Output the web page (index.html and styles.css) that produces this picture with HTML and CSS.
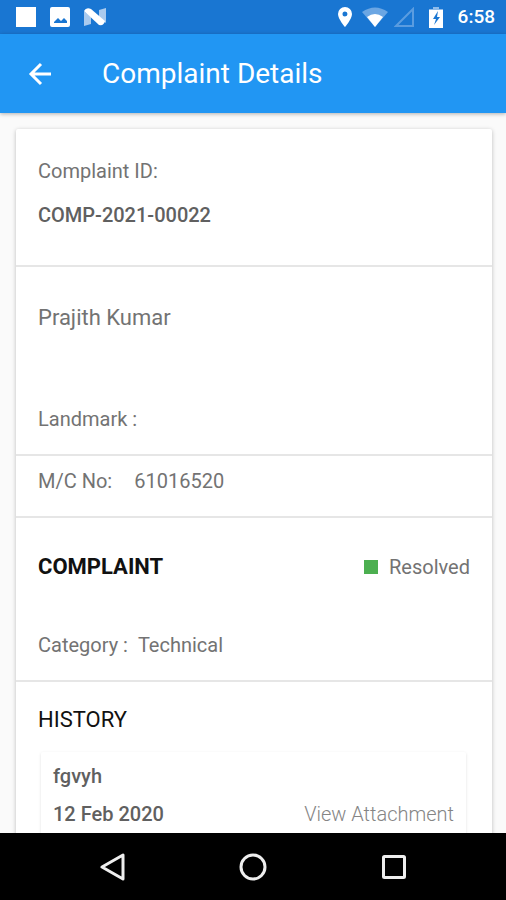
FILE: index.html
```html
<!DOCTYPE html>
<html lang="en">
<head>
<meta charset="utf-8">
<meta name="viewport" content="width=device-width, initial-scale=1">
<title>Complaint Details</title>
<link rel="stylesheet" href="styles.css">
</head>
<body>
<div class="status">
  <div class="status-left">
    <svg width="20" height="20" viewBox="0 0 20 20"><path fill="#fff" d="M0 0h20v20H0z"/></svg>
    <svg width="20" height="20" viewBox="0 0 20 20"><path fill="#fff" fill-rule="evenodd" d="M2 0h16a2 2 0 0 1 2 2v16a2 2 0 0 1-2 2H2a2 2 0 0 1-2-2V2a2 2 0 0 1 2-2zm2 16h13v-2l-3-3-3 3-3-3-4 4z"/></svg>
    <svg width="22" height="20" viewBox="0 0 22 20"><path fill="#a9caee" d="M0 4l7 6v7l-7 2zM15 3l7-2v15l-7-6z"/><path fill="#fff" d="M0 4Q2 0 7 2l14 12q-1 5-6 4z"/></svg>
  </div>
  <div class="status-right">
    <svg class="pin" width="14" height="20" viewBox="0 0 14 20"><path fill="#fff" fill-rule="evenodd" d="M7 0a7 7 0 0 1 7 7c0 5-7 13-7 13S0 12 0 7a7 7 0 0 1 7-7zm0 4.500a2.500 2.500 0 1 0 0 5 2.500 2.500 0 0 0 0-5z"/></svg>
    <svg class="wifi" width="26" height="20" viewBox="0 0 26 20"><path fill="#6ba6e3" d="M0 5Q13-4 26 5L13 20z"/><path fill="#fff" d="M5 10q8-6 16 0l-8 10z"/></svg>
    <svg class="signal" width="20" height="20" viewBox="0 0 20 20"><path fill="none" stroke="#5a9ce0" stroke-width="2" d="M19 2v17H2z"/></svg>
    <svg class="battery" width="14" height="21" viewBox="0 0 14 21"><path fill="#8dbbea" d="M4 0h6v2h4v2H0V2h4z"/><path fill="#fff" d="M0 3h14v18H0z"/><path fill="#1976d2" d="M9 4L4 12h3l-2 6 6-8H8z"/></svg>
    <span>6:58</span>
  </div>
</div>
<header class="appbar">
  <button class="back" type="button" aria-label="Back">
    <svg width="24" height="24" viewBox="0 0 24 24"><path fill="none" stroke="#fff" stroke-width="3" d="M23 12H3M13 2L3 12l10 10"/></svg>
  </button>
  <h1>Complaint Details</h1>
</header>
<main>
  <article class="card">
    <section class="identity">
      <p>Complaint ID:</p>
      <p class="strong">COMP-2021-00022</p>
    </section>
    <section class="customer">
      <p class="name">Prajith Kumar</p>
      <p>Landmark :</p>
    </section>
    <section class="machine">
      <span>M/C No:</span><span>61016520</span>
    </section>
    <section class="complaint">
      <div class="row">
        <h2 class="bold">COMPLAINT</h2>
        <span class="state">Resolved</span>
      </div>
      <p class="category"><span>Category :</span><span>Technical</span></p>
    </section>
    <section class="history">
      <h2>HISTORY</h2>
      <div class="entry">
        <p class="strong">fgvyh</p>
        <div class="row">
          <span class="strong">12 Feb 2020</span>
          <a href="#attachment">View Attachment</a>
        </div>
      </div>
    </section>
  </article>
</main>
<nav class="navbar">
  <button type="button" aria-label="Back"><svg width="28" height="28" viewBox="0 0 28 28"><path fill="none" stroke="#eee" stroke-width="3" stroke-linejoin="round" d="M24 2v24L3 14z"/></svg></button>
  <button type="button" aria-label="Home"><svg width="28" height="28" viewBox="0 0 28 28"><circle cx="14" cy="14" r="12" fill="none" stroke="#eee" stroke-width="3"/></svg></button>
  <button type="button" aria-label="Recent apps"><svg width="28" height="28" viewBox="0 0 28 28"><rect x="3.500" y="3.500" width="21" height="21" rx="1" fill="none" stroke="#eee" stroke-width="3"/></svg></button>
</nav>
</body>
</html>
```

FILE: styles.css
```css
* {
  box-sizing: border-box;
}

body {
  margin: 0;
  height: 100vh;
  display: flex;
  flex-direction: column;
  background: #fafafa;
  color: #737373;
  font: 20px/24px Roboto, sans-serif;
}

h1, h2, p {
  margin: 0;
  font-weight: 400;
}

svg {
  display: block;
  flex: none;
}

button {
  padding: 0;
  border: 0;
  background: none;
}

.status {
  flex: none;
  height: 34px;
  padding: 0 11px 0 16px;
  display: flex;
  align-items: center;
  justify-content: space-between;
  background: #1976d2;
  color: #fff;
  font-size: 19px;
  font-weight: 500;
}

.status-left {
  display: flex;
  gap: 14px;
}

.status-right {
  display: flex;
  align-items: center;
  gap: 6px;
}

.pin {
  margin-right: 4px;
}

.battery {
  margin: 0 9px;
}

.appbar {
  flex: none;
  height: 79px;
  padding: 1px 28px 0;
  display: flex;
  align-items: center;
  gap: 50px;
  background: #2196f3;
  color: #fff;
  box-shadow: 0 1px 4px rgba(0, 0, 0, 0.3);
}

.appbar h1 {
  font-size: 28px;
  line-height: 32px;
}

main {
  flex: 1;
  min-height: 0;
  overflow: hidden;
  padding: 16px 14px 0 16px;
}

.card {
  background: #fff;
  border-radius: 2px;
  box-shadow: 0 1px 4px rgba(0, 0, 0, 0.25);
}

section {
  padding: 0 22px 23px;
  border-bottom: 2px solid #e6e6e6;
}

.strong {
  font-weight: 500;
  color: #606060;
}

.row {
  display: flex;
  align-items: center;
  justify-content: space-between;
}

.identity {
  display: grid;
  gap: 20px;
  padding-top: 30px;
  padding-bottom: 38px;
}

.customer {
  display: grid;
  gap: 77px;
  padding-top: 39px;
}

.name,
h2 {
  font-size: 22px;
}

.machine {
  display: flex;
  gap: 22px;
  padding-top: 13px;
}

.complaint {
  display: grid;
  gap: 54px;
  padding-top: 37px;
}

h2 {
  color: #111;
}

.bold {
  font-weight: 700;
}

.state {
  display: flex;
  align-items: center;
  gap: 11px;
}

.state::before {
  content: "";
  width: 14px;
  height: 14px;
  background: #4caf50;
}

.category {
  display: flex;
  gap: 10px;
}

.history {
  padding-top: 26px;
  border-bottom: 0;
}

.entry {
  display: grid;
  gap: 14px;
  margin: 20px 4px 0 3px;
  padding: 12px 12px 20px;
  border-radius: 2px;
  box-shadow: 0 1px 3px rgba(0, 0, 0, 0.13);
}

.entry a {
  color: #858585;
  font-weight: 300;
  text-decoration: none;
}

.navbar {
  flex: none;
  height: 67px;
  padding: 0 42px 0 43px;
  display: grid;
  grid-template-columns: repeat(3, 1fr);
  place-items: center;
  background: #000;
}
```
